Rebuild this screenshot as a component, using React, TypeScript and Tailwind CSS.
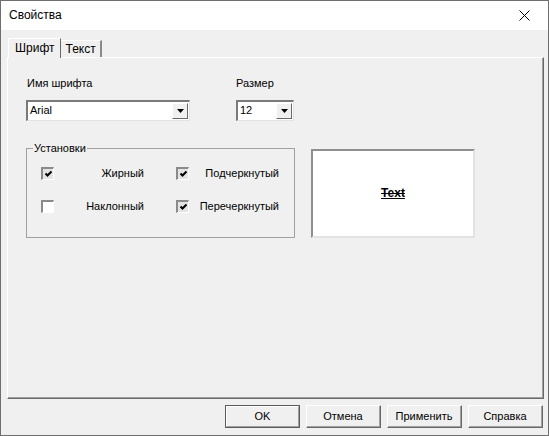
import React from "react";

const font = "font-['Liberation_Sans',Arial,sans-serif]";

function Check({ checked }: { checked: boolean }) {
  return (
    <span
      className={`flex h-[13px] w-[13px] items-center justify-center border-t-2 border-l-2 border-t-[#8a8a8a] border-l-[#8a8a8a] border-b border-r border-b-white border-r-white ${
        checked ? "bg-[#e4e4e4]" : "bg-white"
      }`}
    >
      {checked && (
        <svg width="9" height="8" viewBox="0 0 9 8">
          <path d="M1.5 3.5 L3.5 5.5 L7.5 1.5" fill="none" stroke="#000" strokeWidth="2" />
        </svg>
      )}
    </span>
  );
}

function Option({ label, checked }: { label: string; checked: boolean }) {
  return (
    <div className="flex h-[13px] items-center justify-between">
      <Check checked={checked} />
      <span>{label}</span>
    </div>
  );
}

function Combo({ value, width }: { value: string; width: string }) {
  return (
    <div
      className={`flex h-[21px] ${width} border-t-2 border-l-2 border-t-[#7a7a7a] border-l-[#7a7a7a] border-b border-r border-b-[#e3e3e3] border-r-[#e3e3e3] bg-white`}
    >
      <span className="flex-1 pl-[2px] pt-[2px]">{value}</span>
      <span className="m-[1px] flex w-[16px] items-center justify-center border-t border-l border-t-white border-l-white border-b border-r border-b-[#696969] border-r-[#696969] bg-[#f0f0f0]">
        <svg width="7" height="4" viewBox="0 0 7 4">
          <path d="M0 0 H7 L3.5 4 Z" fill="#000" />
        </svg>
      </span>
    </div>
  );
}

function Btn({ label, primary }: { label: string; primary?: boolean }) {
  return (
    <div
      className={`flex h-[23px] w-[75px] ${
        primary ? "border border-[#5c5c5c]" : "border-t border-l border-t-white border-l-white border-b border-r border-b-[#696969] border-r-[#696969]"
      }`}
    >
      <div
        className={`flex flex-1 items-center justify-center bg-[#f0f0f0] ${
          primary
            ? "border-t border-l border-t-white border-l-white border-b border-r border-b-[#a0a0a0] border-r-[#a0a0a0]"
            : "border-b border-r border-b-[#a0a0a0] border-r-[#a0a0a0]"
        }`}
      >
        {label}
      </div>
    </div>
  );
}

export default function App() {
  return (
    <div
      className={`${font} flex h-[436px] w-[549px] flex-col border border-[#6e6e6e] text-[11px] leading-[13px] text-black`}
    >
      {/* title bar */}
      <div className="flex h-[29px] items-center justify-between bg-white pl-[8px] pr-[18px]">
        <span className="text-[12px]">Свойства</span>
        <svg width="11" height="11" viewBox="0 0 11 11">
          <path d="M0.5 0.5 L10.5 10.5 M10.5 0.5 L0.5 10.5" stroke="#000" strokeWidth="1" />
        </svg>
      </div>

      <div className="flex flex-1 flex-col bg-[#f0f0f0] pt-[8px]">
        {/* tabs */}
        <div className="ml-[7px] flex h-[19px] items-end text-[12px]">
          <div className="relative z-10 -mb-px flex h-[20px] items-center border-t border-l border-t-white border-l-white border-r border-r-[#696969] bg-[#f0f0f0] px-[6px]">
            Шрифт
          </div>
          <div className="flex h-[17px] items-center border-t border-t-white border-r-2 border-r-[#8a8a8a] px-[4px]">
            Текст
          </div>
        </div>

        {/* panel */}
        <div className="ml-[6px] flex h-[342px] w-[537px] border-t border-l border-t-white border-l-white border-b border-r border-b-[#696969] border-r-[#696969]">
          <div className="flex flex-1 flex-col border-b border-r border-b-[#a0a0a0] border-r-[#a0a0a0] pl-[18px] pt-[19px]">
            <div className="flex">
              <div className="flex w-[210px] flex-col">
                <span className="pl-[1px]">Имя шрифта</span>
                <div className="mt-[10px]">
                  <Combo value="Arial" width="w-[164px]" />
                </div>
              </div>
              <div className="flex flex-col">
                <span>Размер</span>
                <div className="mt-[10px]">
                  <Combo value="12" width="w-[58px]" />
                </div>
              </div>
            </div>

            <div className="mt-[27px] flex items-start">
              <div className="relative h-[90px] w-[269px] border border-[#a0a0a0] pl-[14px] pt-[18px]">
                <span className="absolute -top-[7px] left-[6px] bg-[#f0f0f0] px-[1px]">Установки</span>
                <div className="grid grid-cols-[103px_103px] gap-x-[32px] gap-y-[20px]">
                  <Option label="Жирный" checked />
                  <Option label="Подчеркнутый" checked />
                  <Option label="Наклонный" checked={false} />
                  <Option label="Перечеркнутый" checked />
                </div>
              </div>
              <div className="ml-[16px] mt-[1px] flex h-[89px] w-[164px] items-center justify-center border-t-2 border-l-2 border-t-[#8f8f8f] border-l-[#8f8f8f] border-b-2 border-r-2 border-b-[#e3e3e3] border-r-[#e3e3e3] bg-white">
                <span className="text-[12px] font-bold [text-decoration-line:underline_line-through]">Text</span>
              </div>
            </div>
          </div>
        </div>

        {/* buttons */}
        <div className="mt-[6px] flex justify-end gap-[6px] pr-[5px]">
          <Btn label="OK" primary />
          <Btn label="Отмена" />
          <Btn label="Применить" />
          <Btn label="Справка" />
        </div>
      </div>
    </div>
  );
}
